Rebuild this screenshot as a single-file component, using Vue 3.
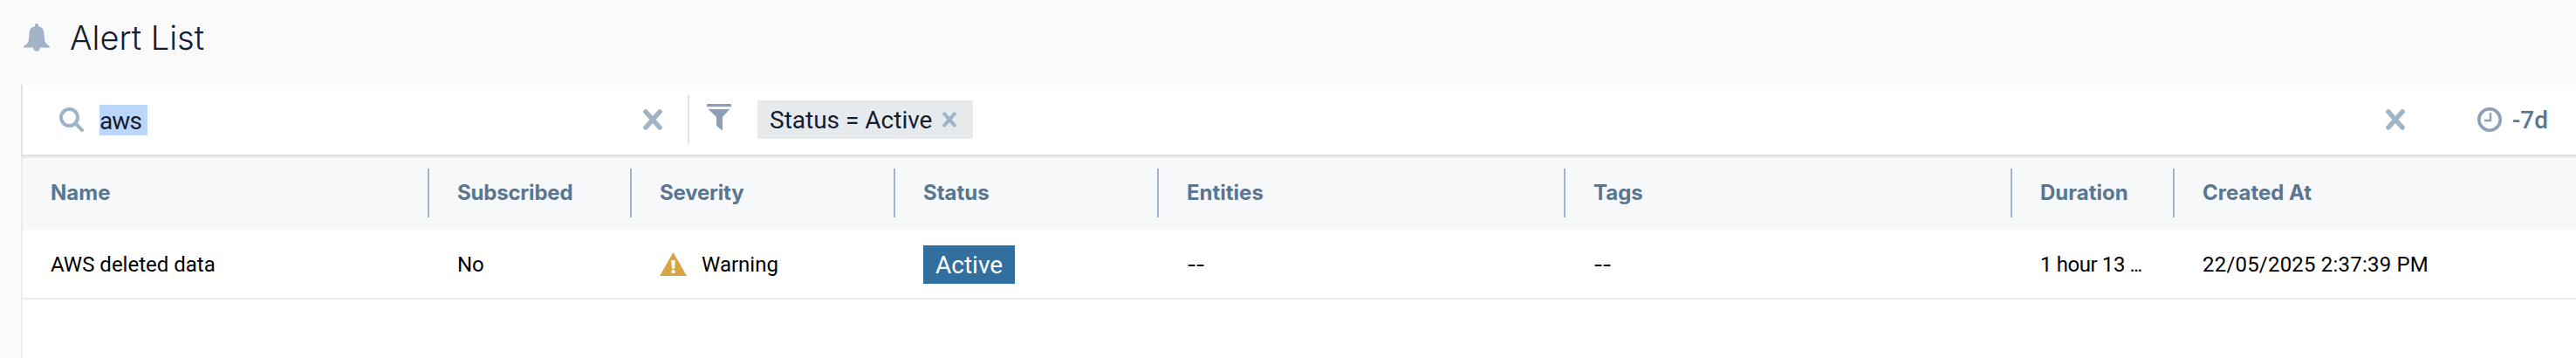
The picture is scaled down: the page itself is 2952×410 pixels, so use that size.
<script setup>
const columns = [
  { key: 'name', label: 'Name' },
  { key: 'subscribed', label: 'Subscribed' },
  { key: 'severity', label: 'Severity' },
  { key: 'status', label: 'Status' },
  { key: 'entities', label: 'Entities' },
  { key: 'tags', label: 'Tags' },
  { key: 'duration', label: 'Duration' },
  { key: 'created', label: 'Created At' }
]
const alerts = [
  {
    name: 'AWS deleted data',
    subscribed: 'No',
    severity: 'Warning',
    status: 'Active',
    entities: '--',
    tags: '--',
    duration: '1 hour 13',
    created: '22/05/2025 2:37:39 PM'
  }
]
</script>

<template>
  <div class="page">
    <header class="title-bar">
      <svg class="bell" width="30" height="32" viewBox="0 0 30 32">
        <path d="M15 0c1.300 0 2 .9 2 2v1.300c3.900.6 5.900 2.700 6.300 6.200l.7 8.500c.3 3.500 2 5.500 5.300 7.600.9.600.8 2-.4 2H19c-.2 2.500-1.900 4.200-4 4.200s-3.800-1.700-4-4.200H1.100c-1.200 0-1.300-1.400-.4-2C4 23.500 5.700 21.500 6 18l.7-8.500C7.100 6 9.100 3.900 13 3.300V2c0-1.100.7-2 2-2z" />
      </svg>
      <h1>Alert List</h1>
    </header>

    <main class="panel">
      <div class="toolbar">
        <div class="search">
          <svg width="28" height="28" viewBox="0 0 28 28" fill="none" stroke="#a1b3c7" stroke-width="4">
            <circle cx="11.500" cy="11.500" r="9.500" />
            <path d="M18.500 18.500L26 26" stroke-linecap="round" />
          </svg>
          <span class="query">aws</span>
          <svg class="clear" width="22" height="24" viewBox="0 0 22 24"><path d="M3 3l16 18M19 3L3 21" /></svg>
        </div>
        <div class="filter">
          <svg class="funnel" width="28" height="30" viewBox="0 0 28 30">
            <path d="M0 0h28v3.200H0zM1.600 6h24.800L18 15v15h-1l-6-5v-10z" />
          </svg>
          <span class="chip">
            <span>Status = Active</span>
            <svg class="clear" width="16" height="18" viewBox="0 0 22 24"><path d="M3 3l16 18M19 3L3 21" /></svg>
          </span>
          <svg class="clear end" width="22" height="24" viewBox="0 0 22 24"><path d="M3 3l16 18M19 3L3 21" /></svg>
        </div>
        <div class="range">
          <svg width="28" height="28" viewBox="0 0 28 28" fill="none" stroke="#8ea0b7">
            <circle cx="14" cy="14" r="12.200" stroke-width="3.600" />
            <path d="M15 6.200V15H8" stroke-width="2.400" />
          </svg>
          <span>-7d</span>
        </div>
      </div>

      <div class="grid head">
        <div v-for="c in columns" :key="c.key" class="cell" :class="c.key"><span>{{ c.label }}</span></div>
      </div>

      <div v-for="a in alerts" :key="a.name" class="grid row">
        <div v-for="c in columns" :key="c.key" class="cell" :class="c.key">
          <svg v-if="c.key === 'severity'" class="warn" width="31" height="27" viewBox="0 0 31 27">
            <path d="M15.500 0L31 27H0z" fill="#d9a441" />
            <path d="M13.300 9h4.400l-.6 9.800h-3.200zM13.600 20.300h3.800v3.700h-3.800z" fill="#fff" />
          </svg>
          <span v-if="c.key === 'status'" class="badge">{{ a[c.key] }}</span>
          <span v-else-if="c.key === 'duration'">{{ a[c.key] }} <span class="more">...</span></span>
          <span v-else>{{ a[c.key] }}</span>
        </div>
      </div>
    </main>
  </div>
</template>

<style>
body { margin: 0; background: #fafafa; }
</style>

<style scoped>
.page {
  display: flex;
  flex-direction: column;
  box-sizing: border-box;
  height: 410px;
  overflow: hidden;
  background: #fafafa;
  font-family: Roboto, "Liberation Sans", sans-serif;
}
svg { display: block; flex: none; }

.title-bar {
  display: flex;
  align-items: center;
  gap: 23px;
  height: 86px;
  padding: 0 0 11px 27px;
  box-sizing: content-box;
}
.bell { fill: #a1b3c7; }
h1 {
  margin: 0;
  font: 300 38px/48px Inter, sans-serif;
  color: #141c2f;
}

.panel {
  flex: 1;
  margin-left: 24px;
  border-left: 2px solid #e9edf1;
  background: #fff;
}
.toolbar {
  display: flex;
  align-items: center;
  height: 80px;
  margin-left: -2px;
  border-left: 2px solid #dce2e8;
  border-bottom: 2px solid #dce2e8;
  font-size: 28px;
  color: #141c2f;
}
.search {
  display: flex;
  align-items: center;
  width: 762px;
  height: 56px;
  border-right: 2px solid #dce2e8;
}
.search > svg:first-child { margin-left: 42px; }
.query {
  width: 55px;
  height: 35px;
  margin-left: 18px;
  line-height: 37px;
  background: #bad6fb;
  letter-spacing: -0.900px;
}
.clear {
  fill: none;
  stroke: #a1b3c7;
  stroke-width: 5.600;
  stroke-linecap: round;
}
.search .clear { margin: 0 29px 0 auto; }
.filter {
  flex: 1;
  display: flex;
  align-items: center;
}
.funnel { margin: -6px 30px 0 20px; fill: #8ea0b7; }
.chip {
  display: flex;
  align-items: center;
  gap: 12px;
  width: 247px;
  height: 44px;
  padding-left: 14px;
  box-sizing: border-box;
  background: #e6eaed;
}
.filter .end { margin: 0 83px 0 auto; }
.range {
  display: flex;
  align-items: center;
  gap: 12px;
  padding-right: 32px;
  font-weight: 500;
  color: #5a7690;
}

.grid {
  display: grid;
  grid-template-columns: 464px 232px 302px 302px 466px 512px 186px 1fr;
  align-items: center;
}
.cell {
  display: flex;
  align-items: center;
  padding-left: 34px;
  white-space: nowrap;
}
.cell:first-child { padding-left: 32px; }
.head {
  height: 82px;
  border-top: 2px solid #e9edf1;
  background: #f6f8fa;
  color: #5a7690;
  font: 700 24px/29px Inter, sans-serif;
}
.head .cell {
  box-sizing: border-box;
  height: 56px;
  padding-bottom: 2px;
  margin-top: -2px;
}
.head .cell + .cell {
  padding-left: 32px;
  border-left: 2px solid #a1b3c7;
}
.head .subscribed,
.head .severity { letter-spacing: -0.200px; }
.row {
  height: 77px;
  padding-top: 1px;
  border-bottom: 2px solid #e9edf1;
  font-size: 24px;
  color: #000;
}
.warn { margin-right: 17px; }
.row .created { letter-spacing: 0.200px; }
.row .duration { letter-spacing: -0.400px; }
.row .entities,
.row .tags {
  font-family: Inter, sans-serif;
  letter-spacing: -1px;
}
.more { letter-spacing: -2px; }
.badge {
  height: 44px;
  padding: 0 14px;
  line-height: 45px;
  font-size: 28px;
  color: #fff;
  background: #306f9f;
}
</style>
